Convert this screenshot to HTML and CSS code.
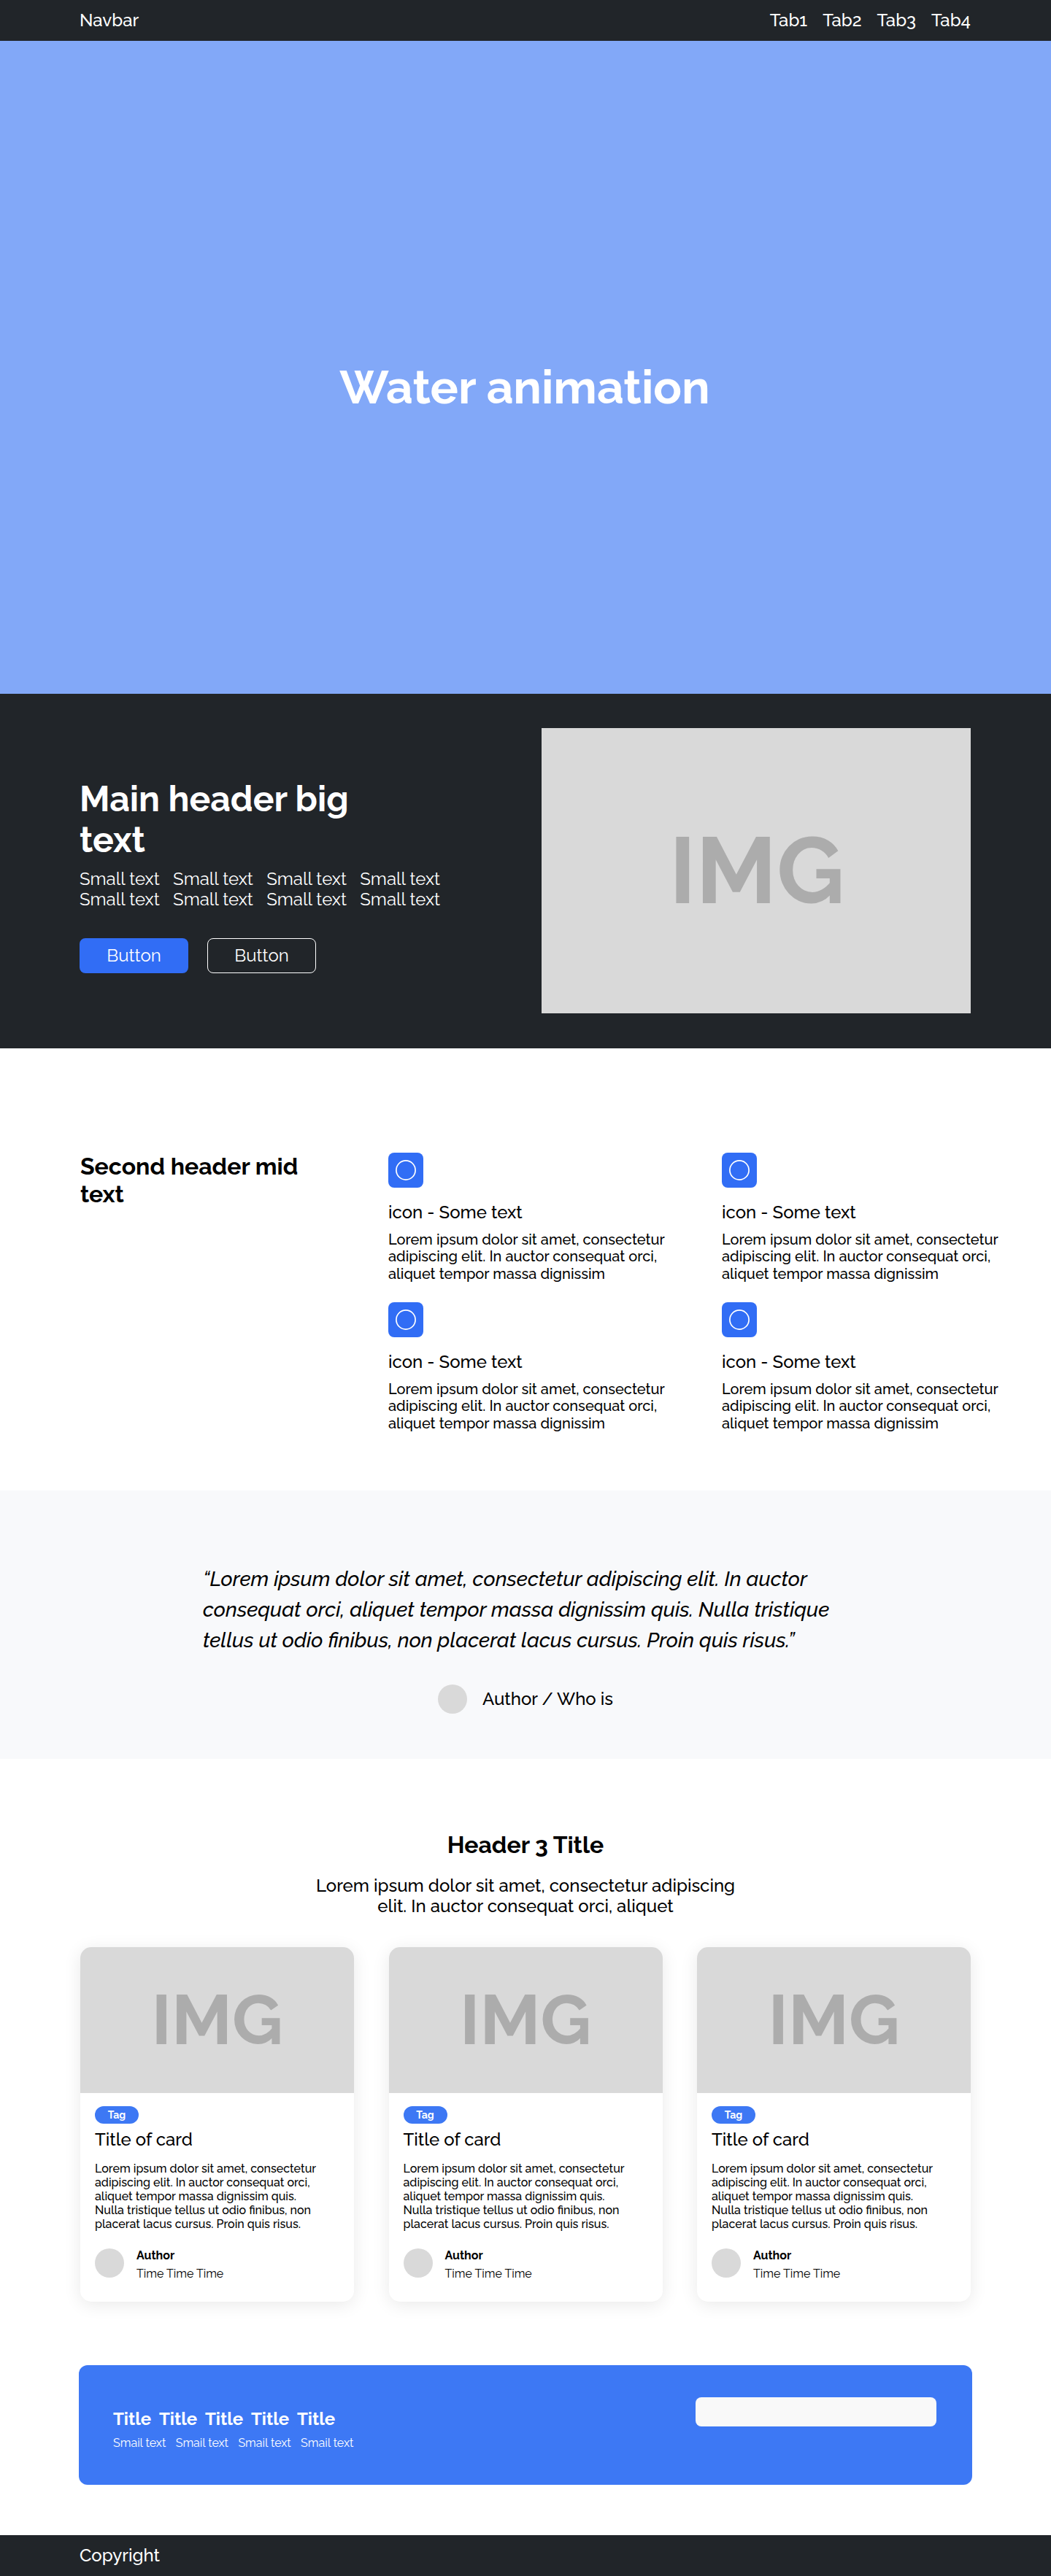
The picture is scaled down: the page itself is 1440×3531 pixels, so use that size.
FILE: index.html
```html
<!DOCTYPE html>
<html lang="en">
<head>
<meta charset="utf-8">
<title>Landing page</title>
<link rel="stylesheet" href="styles.css">
</head>
<body>
<header class="navbar">
  <span class="brand">Navbar</span>
  <nav class="tabs"><a>Tab1</a><a>Tab2</a><a>Tab3</a><a>Tab4</a></nav>
</header>

<section class="hero"><h1 class="hero-title">Water animation</h1></section>

<section class="intro">
  <div class="intro-copy">
    <h2 class="intro-title">Main header big<br>text</h2>
    <div class="intro-text">
      <span>Small text</span><span>Small text</span><span>Small text</span><span>Small text</span>
      <span>Small text</span><span>Small text</span><span>Small text</span><span>Small text</span>
    </div>
    <div class="actions">
      <a class="button button-primary">Button</a>
      <a class="button button-outline">Button</a>
    </div>
  </div>
  <div class="intro-image">IMG</div>
</section>

<section class="features">
  <h2 class="section-title">Second header mid<br>text</h2>
  <div class="feature-grid">
    <article>
      <div class="icon"><svg width="28" height="28" viewBox="0 0 28 28"><circle cx="14" cy="14" r="13.1"/></svg></div>
      <h3 class="item-title">icon - Some text</h3>
      <p class="feature-text">Lorem ipsum dolor sit amet, consectetur<br>adipiscing elit. In auctor consequat orci,<br>aliquet tempor massa dignissim</p>
    </article>
    <article>
      <div class="icon"><svg width="28" height="28" viewBox="0 0 28 28"><circle cx="14" cy="14" r="13.1"/></svg></div>
      <h3 class="item-title">icon - Some text</h3>
      <p class="feature-text">Lorem ipsum dolor sit amet, consectetur<br>adipiscing elit. In auctor consequat orci,<br>aliquet tempor massa dignissim</p>
    </article>
    <article>
      <div class="icon"><svg width="28" height="28" viewBox="0 0 28 28"><circle cx="14" cy="14" r="13.1"/></svg></div>
      <h3 class="item-title">icon - Some text</h3>
      <p class="feature-text">Lorem ipsum dolor sit amet, consectetur<br>adipiscing elit. In auctor consequat orci,<br>aliquet tempor massa dignissim</p>
    </article>
    <article>
      <div class="icon"><svg width="28" height="28" viewBox="0 0 28 28"><circle cx="14" cy="14" r="13.1"/></svg></div>
      <h3 class="item-title">icon - Some text</h3>
      <p class="feature-text">Lorem ipsum dolor sit amet, consectetur<br>adipiscing elit. In auctor consequat orci,<br>aliquet tempor massa dignissim</p>
    </article>
  </div>
</section>

<section class="quote">
  <blockquote class="quote-text">“Lorem ipsum dolor sit amet, consectetur adipiscing elit. In auctor<br>consequat orci, aliquet tempor massa dignissim quis. Nulla tristique<br>tellus ut odio finibus, non placerat lacus cursus. Proin quis risus.”</blockquote>
  <div class="quote-author"><span class="avatar"></span><span class="quote-name">Author / Who is</span></div>
</section>

<section class="posts">
  <h2 class="section-title">Header 3 Title</h2>
  <p class="posts-lead">Lorem ipsum dolor sit amet, consectetur adipiscing<br>elit. In auctor consequat orci, aliquet</p>
  <div class="cards">
    <article class="card">
      <div class="card-image">IMG</div>
      <div class="card-body">
        <span class="tag">Tag</span>
        <h3 class="item-title card-title">Title of card</h3>
        <p class="card-text">Lorem ipsum dolor sit amet, consectetur<br>adipiscing elit. In auctor consequat orci,<br>aliquet tempor massa dignissim quis.<br>Nulla tristique tellus ut odio finibus, non<br>placerat lacus cursus. Proin quis risus.</p>
        <div class="byline"><span class="avatar"></span><div class="byline-text"><b>Author</b><time>Time Time Time</time></div></div>
      </div>
    </article>
    <article class="card">
      <div class="card-image">IMG</div>
      <div class="card-body">
        <span class="tag">Tag</span>
        <h3 class="item-title card-title">Title of card</h3>
        <p class="card-text">Lorem ipsum dolor sit amet, consectetur<br>adipiscing elit. In auctor consequat orci,<br>aliquet tempor massa dignissim quis.<br>Nulla tristique tellus ut odio finibus, non<br>placerat lacus cursus. Proin quis risus.</p>
        <div class="byline"><span class="avatar"></span><div class="byline-text"><b>Author</b><time>Time Time Time</time></div></div>
      </div>
    </article>
    <article class="card">
      <div class="card-image">IMG</div>
      <div class="card-body">
        <span class="tag">Tag</span>
        <h3 class="item-title card-title">Title of card</h3>
        <p class="card-text">Lorem ipsum dolor sit amet, consectetur<br>adipiscing elit. In auctor consequat orci,<br>aliquet tempor massa dignissim quis.<br>Nulla tristique tellus ut odio finibus, non<br>placerat lacus cursus. Proin quis risus.</p>
        <div class="byline"><span class="avatar"></span><div class="byline-text"><b>Author</b><time>Time Time Time</time></div></div>
      </div>
    </article>
  </div>
</section>

<section class="banner">
  <div>
    <div class="banner-titles"><span>Title</span><span>Title</span><span>Title</span><span>Title</span><span>Title</span></div>
    <div class="banner-text"><span>Smail text</span><span>Smail text</span><span>Smail text</span><span>Smail text</span></div>
  </div>
  <input class="banner-input" type="text" aria-label="Email">
</section>

<footer class="footer">Copyright</footer>
</body>
</html>
```
FILE: styles.css
```css
* { box-sizing: border-box; }

body {
  margin: 0;
  background: #fff;
  color: #000;
  font-family: Raleway, Lato, sans-serif;
  font-size: 24px;
  font-weight: 500;
  line-height: 29px;
  white-space: nowrap;
}

h1, h2, h3, p, blockquote { margin: 0; }

/* Navigation */
.navbar {
  display: flex;
  justify-content: space-between;
  align-items: center;
  height: 56px;
  padding: 0 110px 1px 109px;
  background: #212529;
  color: #fff;
}
.tabs { display: flex; gap: 21px; }

/* Hero */
.hero {
  height: 895px;
  padding: 437px 2px 0 0;
  background: #82a8f8;
  color: #fff;
  text-align: center;
}
.hero-title {
  font-size: 64px;
  line-height: 75px;
}

/* Intro */
.intro {
  display: flex;
  justify-content: space-between;
  height: 486px;
  padding: 47px 110px 0 109px;
  background: #212529;
  color: #fff;
}
.intro-copy { padding-top: 69px; }
.intro-title {
  font-size: 48px;
  line-height: 56px;
}
.intro-text {
  display: grid;
  grid-template-columns: repeat(4, 128.1px);
  grid-auto-rows: 28px;
  margin-top: 11px;
  font-weight: 400;
}
.actions {
  display: flex;
  gap: 26px;
  margin-top: 40px;
}
.button {
  display: flex;
  align-items: center;
  justify-content: center;
  width: 149px;
  height: 48px;
  padding-bottom: 1px;
  border-radius: 8px;
  font-weight: 400;
}
.button-primary { background: #316df5; }
.button-outline { border: 1px solid #fff; }
.intro-image,
.card-image {
  display: flex;
  align-items: center;
  justify-content: center;
  background: #d9d9d9;
  color: #acacac;
  font-weight: 700;
}
.intro-image {
  width: 588px;
  height: 391px;
  padding-left: 2px;
  font-size: 128px;
  line-height: 151px;
}

/* Features */
.section-title {
  font-size: 32px;
  line-height: 38px;
}
.features {
  display: grid;
  grid-template-columns: 422px 1fr;
  height: 606px;
  padding: 143px 0 0 110px;
}
.feature-grid {
  display: grid;
  grid-template-columns: repeat(2, 457px);
  grid-auto-rows: 205px;
}
.icon {
  display: flex;
  align-items: center;
  justify-content: center;
  width: 48px;
  height: 48px;
  border-radius: 8px;
  background: #316df5;
}
.icon svg { fill: none; stroke: #fff; stroke-width: 1.7; }
.item-title { font-size: 24px; font-weight: 500; }
.icon + .item-title { margin-top: 19px; }
.feature-text {
  margin-top: 12px;
  font-size: 20px;
  line-height: 23.25px;
}

/* Quote */
.quote {
  height: 368px;
  padding-top: 101px;
  background: #f8f9fb;
}
.quote-text {
  padding-left: 278px;
  font-size: 28px;
  font-style: italic;
  line-height: 42px;
}
.quote-author {
  display: flex;
  align-items: center;
  justify-content: center;
  gap: 21px;
  margin-top: 39px;
}
.quote-name { padding-bottom: 1px; }
.avatar {
  width: 40px;
  height: 40px;
  border-radius: 50%;
  background: #d9d9d9;
}

/* Posts */
.posts {
  padding: 99px 110px 87px;
  text-align: center;
}
.posts-lead {
  margin-top: 23px;
  line-height: 28px;
}
.cards {
  display: grid;
  grid-template-columns: repeat(3, 375px);
  gap: 47.5px;
  margin-top: 42px;
  text-align: left;
}
.card {
  height: 486px;
  overflow: hidden;
  border-radius: 15px;
  background: #fff;
  box-shadow: 0 4px 25px rgba(0, 0, 0, 0.09);
}
.card-image {
  height: 200px;
  padding-bottom: 2px;
  font-size: 96px;
  line-height: 112px;
}
.card-body { padding: 18px 20px; }
.tag {
  display: flex;
  align-items: center;
  justify-content: center;
  width: 60px;
  height: 24px;
  border-radius: 12px;
  background: #3d78f4;
  color: #fff;
  font-size: 14px;
  font-weight: 700;
  line-height: 16px;
}
.card-title { margin-top: 7px; }
.card-text {
  margin-top: 16px;
  font-size: 16px;
  line-height: 19px;
}
.byline {
  display: flex;
  gap: 17px;
  margin-top: 24px;
}
.byline-text {
  display: flex;
  flex-direction: column;
  gap: 6px;
  font-size: 16px;
  line-height: 19px;
}
.byline-text time { font-weight: 400; }

/* Banner */
.banner {
  display: flex;
  justify-content: space-between;
  width: 1224px;
  height: 164px;
  margin: 0 auto 69px;
  padding: 44px 49px 0 47px;
  border-radius: 12px;
  background: #3d78f4;
  color: #fff;
}
.banner-titles {
  display: grid;
  grid-template-columns: repeat(5, 63px);
  margin-top: 15px;
  font-weight: 700;
}
.banner-text {
  display: grid;
  grid-template-columns: repeat(4, 85.7px);
  margin-top: 9px;
  font-size: 16px;
  font-weight: 400;
  line-height: 19px;
}
.banner-input {
  width: 330px;
  height: 40px;
  padding: 0 12px;
  border: 0;
  border-radius: 8px;
  background: #f9f9f9;
  font: inherit;
}

/* Footer */
.footer {
  height: 56px;
  padding: 13px 109px 0;
  background: #212529;
  color: #fff;
}
```
